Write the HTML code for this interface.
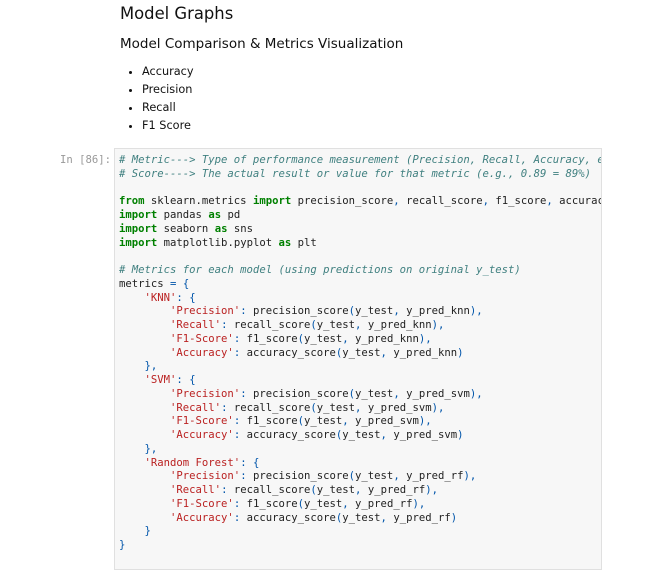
<!DOCTYPE html>
<html><head><meta charset="utf-8"><style>
body{margin:0;background:#fff;width:650px;height:552px;overflow:hidden;font-family:"DejaVu Sans","Liberation Sans",sans-serif;color:#000;position:relative}
.h1{position:absolute;left:120px;top:4px;font-size:16.4px;color:#111}
.h2{position:absolute;left:120px;top:36px;font-size:13.5px;color:#111}
ul{position:absolute;left:120px;top:63px;margin:0;padding:0 0 0 22px;font-size:11.3px;line-height:18px;color:#111}
.prompt{position:absolute;left:60px;top:154px;font-family:"DejaVu Sans Mono",monospace;font-size:10.6px;color:#999}
.cell{position:absolute;left:114px;top:148px;width:486px;height:420px;background:#f7f7f7;border:1px solid #e0e0e0;overflow:hidden}
pre{margin:0;position:absolute;left:4px;top:5px;font-family:"DejaVu Sans Mono",monospace;font-size:10.6px;line-height:13.75px;color:#222;white-space:pre}
.c{color:#408080;font-style:italic}.k{color:#008000;font-weight:bold}.s{color:#ba2121}.p{color:#0055aa}
</style></head><body>
<div class="h1">Model Graphs</div>
<div class="h2">Model Comparison &amp; Metrics Visualization</div>
<ul><li>Accuracy</li><li>Precision</li><li>Recall</li><li>F1 Score</li></ul>
<div class="prompt">In [86]:</div>
<div class="cell"><pre><span class="c"># Metric---&gt; Type of performance measurement (Precision, Recall, Accuracy, etc.)</span>
<span class="c"># Score----&gt; The actual result or value for that metric (e.g., 0.89 = 89%)</span>

<span class="k">from</span> sklearn.metrics <span class="k">import</span> precision_score<span class="p">,</span> recall_score<span class="p">,</span> f1_score<span class="p">,</span> accuracy_score
<span class="k">import</span> pandas <span class="k">as</span> pd
<span class="k">import</span> seaborn <span class="k">as</span> sns
<span class="k">import</span> matplotlib.pyplot <span class="k">as</span> plt

<span class="c"># Metrics for each model (using predictions on original y_test)</span>
metrics <span class="p">=</span> <span class="p">{</span>
    <span class="s">'KNN'</span><span class="p">:</span> <span class="p">{</span>
        <span class="s">'Precision'</span><span class="p">:</span> precision_score<span class="p">(</span>y_test<span class="p">,</span> y_pred_knn<span class="p">),</span>
        <span class="s">'Recall'</span><span class="p">:</span> recall_score<span class="p">(</span>y_test<span class="p">,</span> y_pred_knn<span class="p">),</span>
        <span class="s">'F1-Score'</span><span class="p">:</span> f1_score<span class="p">(</span>y_test<span class="p">,</span> y_pred_knn<span class="p">),</span>
        <span class="s">'Accuracy'</span><span class="p">:</span> accuracy_score<span class="p">(</span>y_test<span class="p">,</span> y_pred_knn<span class="p">)</span>
    <span class="p">},</span>
    <span class="s">'SVM'</span><span class="p">:</span> <span class="p">{</span>
        <span class="s">'Precision'</span><span class="p">:</span> precision_score<span class="p">(</span>y_test<span class="p">,</span> y_pred_svm<span class="p">),</span>
        <span class="s">'Recall'</span><span class="p">:</span> recall_score<span class="p">(</span>y_test<span class="p">,</span> y_pred_svm<span class="p">),</span>
        <span class="s">'F1-Score'</span><span class="p">:</span> f1_score<span class="p">(</span>y_test<span class="p">,</span> y_pred_svm<span class="p">),</span>
        <span class="s">'Accuracy'</span><span class="p">:</span> accuracy_score<span class="p">(</span>y_test<span class="p">,</span> y_pred_svm<span class="p">)</span>
    <span class="p">},</span>
    <span class="s">'Random Forest'</span><span class="p">:</span> <span class="p">{</span>
        <span class="s">'Precision'</span><span class="p">:</span> precision_score<span class="p">(</span>y_test<span class="p">,</span> y_pred_rf<span class="p">),</span>
        <span class="s">'Recall'</span><span class="p">:</span> recall_score<span class="p">(</span>y_test<span class="p">,</span> y_pred_rf<span class="p">),</span>
        <span class="s">'F1-Score'</span><span class="p">:</span> f1_score<span class="p">(</span>y_test<span class="p">,</span> y_pred_rf<span class="p">),</span>
        <span class="s">'Accuracy'</span><span class="p">:</span> accuracy_score<span class="p">(</span>y_test<span class="p">,</span> y_pred_rf<span class="p">)</span>
    <span class="p">}</span>
<span class="p">}</span></pre></div>
</body></html>
